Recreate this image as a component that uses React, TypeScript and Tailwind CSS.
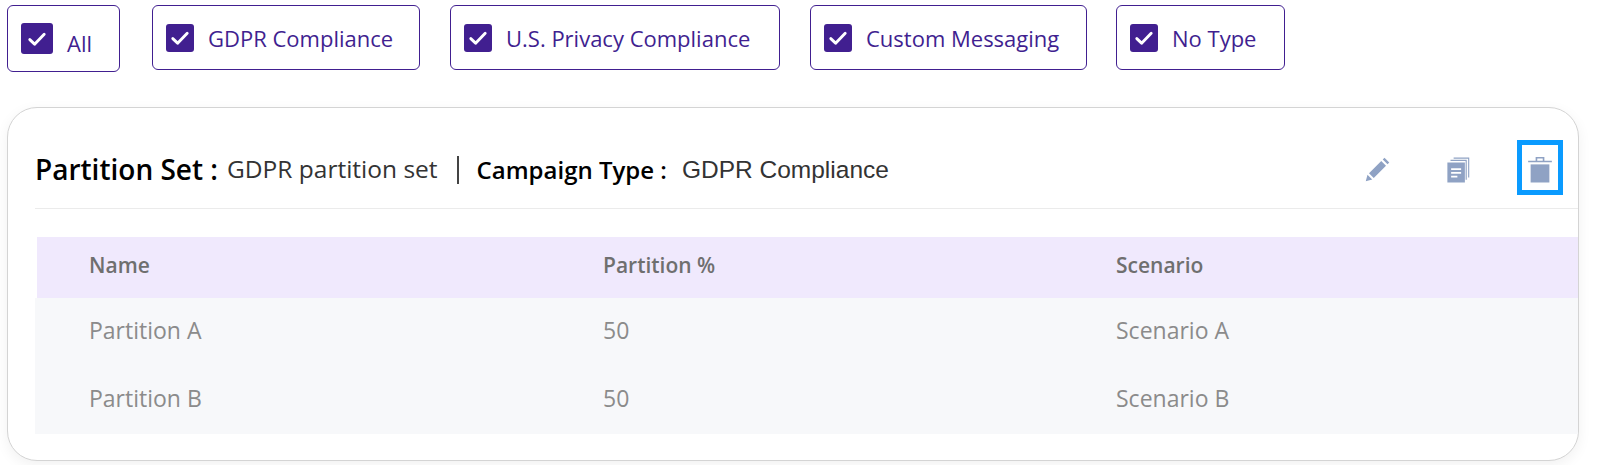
import React from 'react';

const filters = [
  { label: 'All', box: 'w-[113px] h-[67px] pl-[13px] gap-[14px] mr-[32px]', check: 'w-8 h-[31px]', text: 'mt-[9px]' },
  { label: 'GDPR Compliance', box: 'w-[268px] h-[65px] pl-[13px] gap-[14px] mr-[30px]', check: 'w-7 h-7', text: 'mt-[2px]' },
  { label: 'U.S. Privacy Compliance', box: 'w-[330px] h-[65px] pl-[13px] gap-[14px] mr-[30px]', check: 'w-7 h-7', text: 'mt-[2px]' },
  { label: 'Custom Messaging', box: 'w-[277px] h-[65px] pl-[13px] gap-[14px] mr-[29px]', check: 'w-7 h-7', text: 'mt-[2px]' },
  { label: 'No Type', box: 'w-[169px] h-[65px] pl-[13px] gap-[14px]', check: 'w-7 h-7', text: 'mt-[2px]' },
];

const rows = [
  { name: 'Partition A', pct: '50', scenario: 'Scenario A' },
  { name: 'Partition B', pct: '50', scenario: 'Scenario B' },
];

function Check({ className }: { className: string }) {
  return (
    <span className={`flex items-center justify-center rounded-[3px] bg-[#411f90] ${className}`}>
      <svg viewBox="0 0 20 20" className="w-6 h-6" fill="none" stroke="#fff" strokeWidth="2.4" strokeLinecap="round" strokeLinejoin="round">
        <path d="M4 10.500l4 3.800 8-8.300" />
      </svg>
    </span>
  );
}

export default function App() {
  return (
    <div className="w-[1612px] h-[465px] bg-white overflow-hidden font-['Open_Sans','Noto_Sans',sans-serif]">
      <div className="flex items-start pt-[5px] pl-[7px]">
        {filters.map((f) => (
          <div key={f.label} className={`flex items-center shrink-0 rounded-[6px] border border-[#411f90] ${f.box}`}>
            <Check className={f.check} />
            <span className={`text-[22px] font-medium text-[#411f90] ${f.text}`}>{f.label}</span>
          </div>
        ))}
      </div>

      <div className="ml-[7px] mt-[35px] w-[1572px] h-[354px] rounded-[30px] border border-[#d4d4d4] bg-white shadow-[0_4px_14px_rgba(0,0,0,0.06)] pl-[27px] pt-[30px]">
        <div className="flex items-center h-[71px] pb-[6px] border-b border-[#ebebeb]">
          <span className="mb-[2px] text-[28px] font-semibold text-black">Partition Set :</span>
          <span className="ml-[9px] mb-[2px] text-[24.500px] text-[#333]">GDPR partition set</span>
          <span className="ml-[19px] h-[28px] w-[2px] bg-[#444]" />
          <span className="ml-[18px] text-[24px] font-semibold text-black">Campaign Type :</span>
          <span className="ml-[15px] text-[24.500px] text-[#333] font-['Liberation_Sans',sans-serif]">GDPR Compliance</span>
          <div className="ml-auto flex items-center mr-[15px]">
            <svg viewBox="0 0 24 24" className="w-[30px] h-[30px] mr-[51px]" fill="#8fa2c4">
              <path d="M3 21l1.400-5.200L8.200 19.600zM5.600 14.600L15.400 4.800l3.800 3.800-9.800 9.800zM16.600 3.600l1.400-1.400 3.800 3.800-1.400 1.400z" />
            </svg>
            <svg viewBox="0 0 24 24" className="w-[30px] h-[30px] mr-[44px]" fill="#8fa2c4">
              <path d="M3.500 6h14v16h-14z" />
              <path d="M6.500 10.500h8v1.400h-8zM6.500 13.500h8v1.400h-8zM6.500 16.500h5v1.400h-5z" fill="#fff" />
              <path d="M6 3.800h13v16h-.9V4.700H6zM8.500 2h12.500v16h-.9V2.900H8.500z" />
            </svg>
            <div className="flex items-center justify-center w-[46px] h-[55px] mb-[6px] border-[5px] border-[#0a9bff]">
              <svg viewBox="0 0 24 24" className="w-[30px] h-[30px] mt-[6px]" fill="#8fa2c4">
                <path d="M4.500 7.500h15V22h-15z" />
                <path d="M2.500 4.500h19v1.300h-19zM8.500 1.500h7v3h-1.300V2.800H9.800v1.700H8.500z" />
              </svg>
            </div>
          </div>
        </div>

        <div className="mt-[28px]">
          <div className="ml-[2px] grid grid-cols-[514px_513px_1fr] items-center h-[61px] pl-[52px] bg-[#f0e9fd] text-[21px] font-semibold text-[#6f6f6f]">
            <span className="mb-[3px]">Name</span>
            <span className="mb-[3px]">Partition %</span>
            <span className="mb-[3px]">Scenario</span>
          </div>
          <div className="bg-[#f7f8fa] h-[136px]">
            {rows.map((r) => (
              <div key={r.name} className="grid grid-cols-[514px_513px_1fr] items-center h-[68px] pb-[4px] pl-[54px] text-[23px] text-[#8b8b8b]">
                <span>{r.name}</span>
                <span>{r.pct}</span>
                <span>{r.scenario}</span>
              </div>
            ))}
          </div>
        </div>
      </div>
    </div>
  );
}
